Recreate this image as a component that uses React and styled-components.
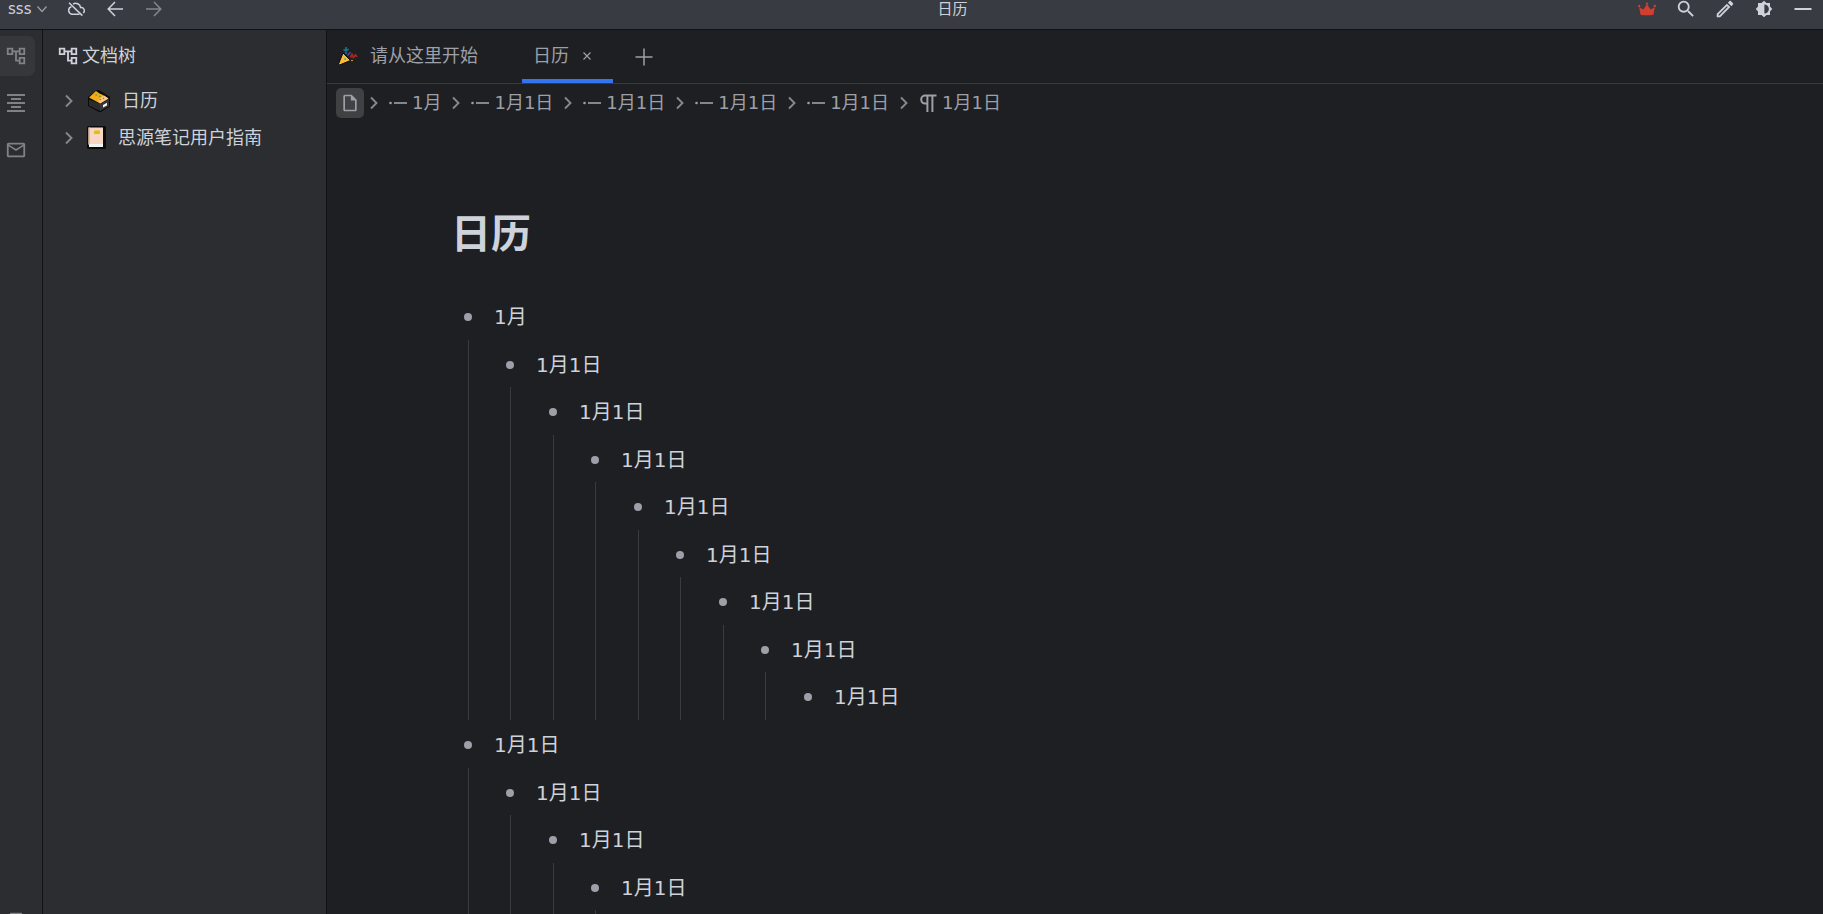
import React, { useState } from "react";
import styled, { createGlobalStyle, css } from "styled-components";
import {
  MdOutlineAccountTree,
  MdFormatAlignCenter,
  MdMailOutline,
  MdBookmarkBorder,
  MdSearch,
  MdOutlineEdit,
  MdOutlineInsertDriveFile
} from "react-icons/md";

const DAY = "1月1日";

// one entry per top level item, every label is nested in the one before it
const outline = [
  ["1月", DAY, DAY, DAY, DAY, DAY, DAY, DAY, DAY],
  [DAY, DAY, DAY, DAY, DAY]
];

const crumbs = ["1月", DAY, DAY, DAY, DAY];

const Chevron = () => (
  <svg width="8" height="14" viewBox="0 0 8 14" fill="none" stroke="currentColor" strokeWidth="1.9">
    <path d="M1 1.5 6.5 7 1 12.5" />
  </svg>
);

const ChevronDown = () => (
  <svg width="10" height="10" viewBox="0 0 10 10" fill="none" stroke="currentColor" strokeWidth="1.3">
    <path d="M.5 2.5 5 7.5 9.5 2.5" />
  </svg>
);

const CloudOff = () => (
  <svg width="18" height="18" viewBox="0 0 18 18" fill="none" stroke="currentColor" strokeWidth="1.5">
    <path d="M6 4.2A4.8 4.8 0 0 1 13.6 7.6 3.1 3.1 0 0 1 16.2 13M12.6 14.2H5A3.8 3.8 0 0 1 4.4 6.8" />
    <path d="M2 2.8 15.4 15.6" />
  </svg>
);

const Arrow = ({ back }) => (
  <svg width="16" height="16" viewBox="0 0 16 16" fill="none" stroke="currentColor" strokeWidth="1.5">
    <path d={back ? "M8 1 1.2 8 8 15M1.2 8H16" : "M8 1 14.8 8 8 15M14.8 8H0"} />
  </svg>
);

const Crown = () => (
  <svg width="18" height="14" viewBox="0 0 18 14" fill="currentColor">
    <path d="M2.6 12.8 1.2 5.2 5.4 7.4 9 2.2l3.6 5.2 4.2-2.2-1.4 7.6q-6.4 1-12.8 0z" />
    <circle cx="9" cy="1.6" r="1.2" />
    <circle cx="1.2" cy="4" r="1.2" />
    <circle cx="16.8" cy="4" r="1.2" />
  </svg>
);

const Contrast = () => (
  <svg width="18" height="18" viewBox="0 0 24 24" fill="currentColor">
    <path d="M20 15.3 23 12 20 8.7V4h-4.7L12 1 8.7 4H4v4.7L1 12 4 15.3V20h4.7l3.3 3 3.3-3H20zM12.5 18V6a6 6 0 0 1 0 12z" />
  </svg>
);

const Minus = () => (
  <svg width="18" height="18" viewBox="0 0 18 18" stroke="currentColor" strokeWidth="2">
    <path d="M.5 9h17" />
  </svg>
);

const Plus = () => (
  <svg width="18" height="18" viewBox="0 0 18 18" stroke="currentColor" strokeWidth="1.5">
    <path d="M.5 9h17M9 .5v17" />
  </svg>
);

const Cross = () => (
  <svg width="8" height="8" viewBox="0 0 8 8" stroke="currentColor" strokeWidth="1.2">
    <path d="m.5.5 7 7m0-7-7 7" />
  </svg>
);

const ListItemIcon = () => (
  <svg width="18" height="18" viewBox="0 0 18 18" fill="currentColor">
    <circle cx="1.5" cy="9" r="1.3" />
    <path d="M5 8.2h13v1.6H5z" />
  </svg>
);

const Paragraph = () => (
  <svg width="18" height="18" viewBox="0 0 18 18" fill="none" stroke="currentColor" strokeWidth="2">
    <path d="M17.5 1.6H6.2a4 4 0 0 0 0 8H8M8.4 1.6V18M13.4 1.6V18" />
  </svg>
);

const CardBox = () => (
  <svg width="24" height="24" viewBox="0 0 24 24">
    <path d="M1 8 10 1h2l11 7v9l-9 6h-2L1 17z" fill="#0b0b0c" />
    <path d="M2 10.5 13 15v7L2 16.5z" fill="#2a2b2d" />
    <path d="m13 15 9-5v7l-9 5z" fill="#36373a" />
    <path d="m16 16 4-2.200v2.600l-4 2.200z" fill="#f4f4f4" />
    <path d="M2 8.500 9 2l3.500 2.500 2.500 1 6.500 4-8.500 5z" fill="#f5ab12" />
    <path d="m11 11 6-4.500 4.500 3-8.500 5z" fill="#f7c98a" />
    <path d="m8.500 5.500 1.500.8M12 7l1.500.8" stroke="#3c9a55" strokeWidth="1.300" />
    <path d="m12.500 11 1.500-.8M16 9l1 .8" stroke="#e5533d" strokeWidth="1.300" />
  </svg>
);

const Notebook = () => (
  <svg width="19" height="23" viewBox="0 0 19 23">
    <rect width="19" height="23" rx="1.5" fill="#0b0b0c" />
    <path d="M1.500 1.500H16V18H1.500z" fill="#f7d7c4" />
    <path d="M1.500 1.500H3V19H1.500z" fill="#e8b79c" />
    <path d="M2 18h14v3H2z" fill="#f2f2f2" />
    <rect x="7" y="4.500" width="6" height="3.500" rx="1" fill="#e3bd0b" />
  </svg>
);

const Popper = () => (
  <svg width="20" height="20" viewBox="0 0 20 20">
    <path d="M5 7 12.500 14.500 1.500 19 .5 18z" fill="#fbbb35" stroke="#0b0b0c" />
    <circle cx="7" cy="13" r=".8" fill="#128db0" />
    <path d="M8 8V4M5.500 3.500 8 5l2.500-2M8 1v3" stroke="#12708c" strokeWidth="1.700" fill="none" />
    <path d="m12.500 11.500 1.500-3 1.500 3 2-2.500 1.500 2" stroke="#a8281f" strokeWidth="1.700" fill="none" />
    <path d="m9.500 9.500 3-3.500" stroke="#5b3f9a" strokeWidth="1.600" />
    <circle cx="14" cy="14.500" r=".8" fill="#fbbb35" />
  </svg>
);

const TreeNode = ({ labels, depth }) => (
  <li>
    <ItemRow $depth={depth}>
      <Bullet />
      <span>{labels[0]}</span>
    </ItemRow>
    {labels.length > 1 ? (
      <NestedList $depth={depth + 1}>
        <TreeNode labels={labels.slice(1)} depth={depth + 1} />
      </NestedList>
    ) : null}
  </li>
);

const App = () => {
  const [tab, setTab] = useState("calendar");

  return (
    <Window>
      <GlobalStyle />
      <TitleBar>
        <BarGroup>
          <WorkspaceButton>
            sss <ChevronDown />
          </WorkspaceButton>
          <BarButton aria-label="云端同步">
            <CloudOff />
          </BarButton>
          <BarButton aria-label="后退">
            <Arrow back />
          </BarButton>
          <BarButton aria-label="前进" $dim>
            <Arrow />
          </BarButton>
        </BarGroup>
        <WindowTitle>日历</WindowTitle>
        <BarGroup $end>
          <BarButton aria-label="会员" $color="#d23f31">
            <Crown />
          </BarButton>
          <BarButton aria-label="搜索">
            <MdSearch size={22} />
          </BarButton>
          <BarButton aria-label="编辑">
            <MdOutlineEdit size={22} />
          </BarButton>
          <BarButton aria-label="外观">
            <Contrast />
          </BarButton>
          <BarButton aria-label="最小化">
            <Minus />
          </BarButton>
        </BarGroup>
      </TitleBar>
      <Body>
        <Dock>
          <DockButton aria-label="文档树" $active>
            <MdOutlineAccountTree size={22} />
          </DockButton>
          <DockButton aria-label="大纲">
            <MdFormatAlignCenter size={24} />
          </DockButton>
          <DockButton aria-label="收集箱">
            <MdMailOutline size={22} />
          </DockButton>
          <DockButton aria-label="书签" $bottom>
            <MdBookmarkBorder size={22} />
          </DockButton>
        </Dock>
        <Sidebar>
          <SidebarHeader>
            <MdOutlineAccountTree size={22} />
            文档树
          </SidebarHeader>
          <TreeRow href="#calendar">
            <Chevron />
            <TreeIcon $wide>
              <CardBox />
            </TreeIcon>
            日历
          </TreeRow>
          <TreeRow href="#guide">
            <Chevron />
            <TreeIcon>
              <Notebook />
            </TreeIcon>
            思源笔记用户指南
          </TreeRow>
        </Sidebar>
        <Main>
          <TabBar>
            <Tab $wide $active={tab === "start"} onClick={() => setTab("start")}>
              <Popper />
              请从这里开始
            </Tab>
            <Tab $active={tab === "calendar"} onClick={() => setTab("calendar")}>
              日历
              <Cross />
            </Tab>
            <NewTab aria-label="新建页签">
              <Plus />
            </NewTab>
          </TabBar>
          <Breadcrumb>
            <DocButton aria-label="文档">
              <MdOutlineInsertDriveFile size={20} />
            </DocButton>
            {crumbs.map((label, i) => (
              <React.Fragment key={i}>
                <Chevron />
                <Crumb href="#block">
                  <ListItemIcon />
                  {label}
                </Crumb>
              </React.Fragment>
            ))}
            <Chevron />
            <Crumb href="#block">
              <Paragraph />
              {DAY}
            </Crumb>
          </Breadcrumb>
          <Editor>
            <DocTitle>日历</DocTitle>
            <List>
              {outline.map((labels, i) => (
                <TreeNode key={i} labels={labels} depth={0} />
              ))}
            </List>
          </Editor>
        </Main>
      </Body>
    </Window>
  );
};

export default App;

const GlobalStyle = createGlobalStyle`
  * {
    box-sizing: border-box;
  }

  body {
    margin: 0;
    background-color: #1e1f22;
    color: #ced2da;
    font-family: "DejaVu Sans", "Noto Sans CJK SC", sans-serif;
    font-size: 18px;
    line-height: 24px;
  }

  button {
    padding: 0;
    border: none;
    background: none;
    color: inherit;
    font: inherit;
    cursor: pointer;
  }

  a {
    color: inherit;
    text-decoration: none;
  }

  svg {
    flex-shrink: 0;
  }
`;

const Window = styled.div`
  display: flex;
  flex-direction: column;
  height: 100vh;
  overflow: hidden;
`;

const TitleBar = styled.header`
  display: grid;
  grid-template-columns: 1fr auto 1fr;
  align-items: center;
  height: 30px;
  padding: 0 10px 11px 8px;
  border-bottom: 1px solid #111214;
  background-color: #393b43;
  font-size: 15px;
  line-height: 18px;
`;

const BarGroup = styled.div`
  display: flex;
  align-items: center;
  gap: 19px;
  justify-content: ${props => (props.$end ? "flex-end" : "flex-start")};
`;

const BarButton = styled.button`
  display: flex;
  align-items: center;
  justify-content: center;
  width: 20px;
  height: 18px;
  color: ${props => props.$color || (props.$dim ? "#83868d" : "#ced2da")};
`;

const WorkspaceButton = styled.button`
  display: flex;
  align-items: center;
  gap: 6px;

  svg {
    color: #9a9da4;
  }
`;

const WindowTitle = styled.span`
  padding-left: 84px;
`;

const Body = styled.div`
  display: flex;
  flex: 1;
  min-height: 0;
`;

const Dock = styled.nav`
  display: flex;
  flex-direction: column;
  flex-shrink: 0;
  gap: 7px;
  width: 43px;
  padding-top: 6px;
  border-right: 1px solid #111214;
  background-color: #2b2d30;
`;

const DockButton = styled.button`
  display: flex;
  align-items: center;
  justify-content: center;
  width: 35px;
  height: 40px;
  padding-right: 4px;
  border-radius: 0 7px 7px 0;
  color: #7f8287;
  ${props =>
    props.$active &&
    css`
      background-color: #35373a;
    `}
  ${props =>
    props.$bottom &&
    css`
      margin: auto 0 -27px;
    `}
`;

const Sidebar = styled.aside`
  flex-shrink: 0;
  width: 284px;
  border-right: 1px solid #111214;
  background-color: #2b2d30;
`;

const SidebarHeader = styled.div`
  display: flex;
  align-items: center;
  gap: 3px;
  height: 52px;
  padding-left: 14px;
`;

const TreeRow = styled.a`
  display: flex;
  align-items: center;
  height: 37px;
  padding-left: 22px;

  > svg {
    color: #85888e;
  }
`;

const TreeIcon = styled.span`
  display: flex;
  width: ${props => (props.$wide ? "35px" : "31px")};
  margin-left: 14px;
`;

const Main = styled.main`
  display: flex;
  flex: 1;
  flex-direction: column;
  min-width: 0;
`;

const TabBar = styled.div`
  display: flex;
  height: 54px;
  border-bottom: 1px solid #393b40;
  color: #9da0a8;
`;

const Tab = styled.button`
  display: flex;
  align-items: center;
  gap: ${props => (props.$wide ? "12px" : "14px")};
  min-width: ${props => (props.$wide ? "195px" : "91px")};
  padding: 6px 11px 4px;
  border-bottom: 4px solid ${props => (props.$active ? "#3574f0" : "transparent")};
`;

const NewTab = styled.button`
  display: flex;
  align-items: center;
  margin-left: 22px;
`;

const Breadcrumb = styled.nav`
  display: flex;
  align-items: center;
  gap: 6px;
  height: 38px;
  padding-left: 9px;
  color: #9da0a8;

  > svg {
    color: #85888e;
  }
`;

const DocButton = styled.button`
  display: flex;
  align-items: center;
  justify-content: center;
  width: 28px;
  height: 30px;
  border-radius: 5px;
  background-color: #3f4143;
`;

const Crumb = styled.a`
  display: flex;
  align-items: center;
  gap: 5px;
  margin: 0 5px;
`;

const Editor = styled.article`
  flex: 1;
  min-height: 0;
  padding: 82px 124px 0;
  overflow: hidden;
`;

const DocTitle = styled.h1`
  margin: 0 0 28px;
  font-size: 40px;
  line-height: 60px;
`;

const List = styled.ul`
  margin: 0;
  padding: 0;
  list-style: none;
`;

const NestedList = styled(List)`
  margin-left: 17px;
  padding-left: ${props => (props.$depth % 2 ? "24px" : "25px")};
  border-left: 1px solid #393b40;
`;

const ItemRow = styled.div`
  display: flex;
  align-items: center;
  gap: 22px;
  height: ${props => (props.$depth % 2 ? "47px" : "48px")};
  padding: 2px 0 0 13px;
  font-size: 20px;
  line-height: 32px;
`;

const Bullet = styled.span`
  width: 8px;
  height: 8px;
  border-radius: 50%;
  background-color: #9da0a8;
`;
